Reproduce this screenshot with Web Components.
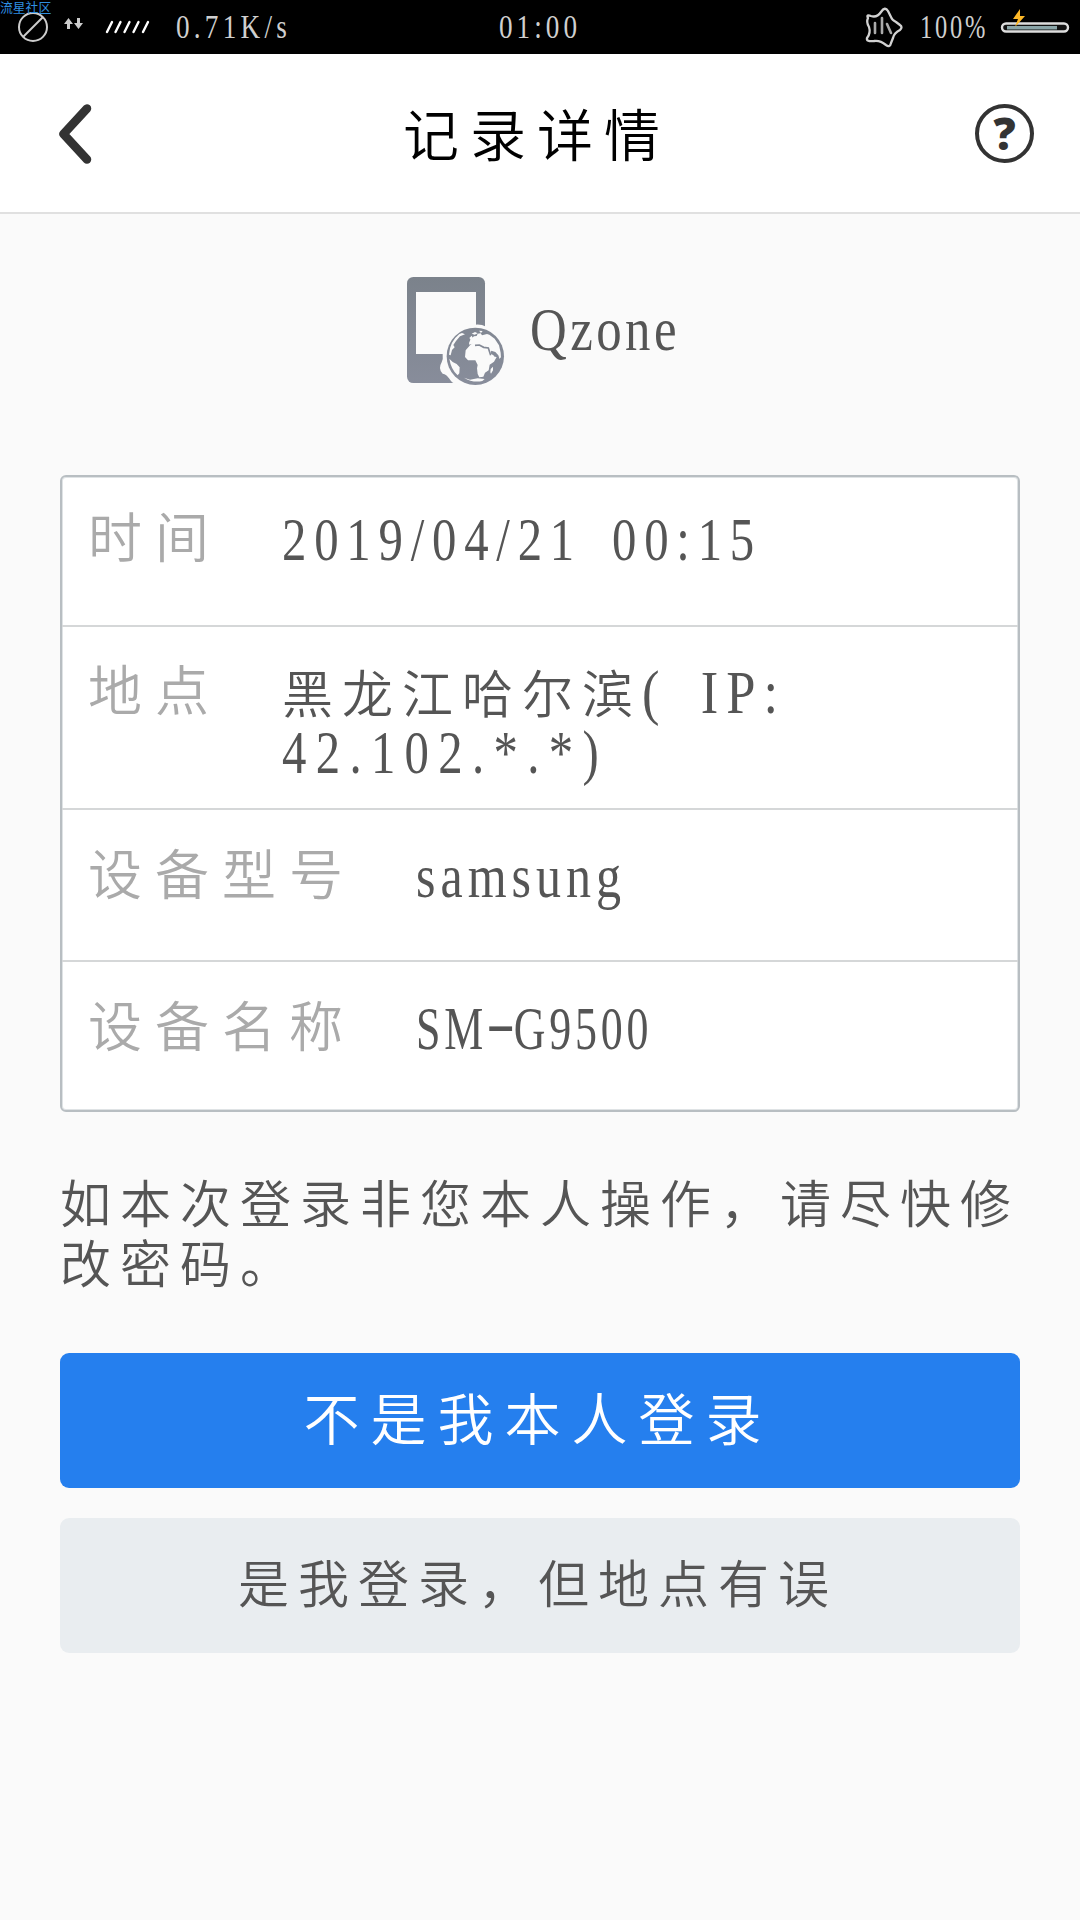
<!DOCTYPE html>
<html lang="zh-CN">
<head>
<meta charset="UTF-8">
<meta name="viewport" content="width=1080">
<title>记录详情</title>
<style>
    body {
        margin: 0;
        background: #fafafa;
        font-family: "Liberation Serif", "Noto Sans CJK SC", serif;
        font-weight: 350;
    }
</style>
</head>
<body>
<record-page></record-page>

<script>
// Latin text squeezed to a fixed total width
class FitText extends HTMLElement {
    connectedCallback() {
        this.attachShadow({ mode: 'open' });
        this.shadowRoot.innerHTML = `
            <style>
                :host {
                    display: inline-block;
                    white-space: nowrap;
                    font-weight: 400;
                }

                span {
                    display: inline-block;
                    white-space: pre;
                    transform-origin: 0 50%;
                }
            </style>
            <span><slot></slot></span>
        `;
        const span = this.shadowRoot.querySelector('span');
        const width = Number(this.getAttribute('width'));
        const scale = Number(this.getAttribute('scale') || 0.86);
        const count = this.textContent.length;
        span.style.letterSpacing = '0';
        const natural = span.getBoundingClientRect().width;
        span.style.letterSpacing = (width / scale - natural) / count + 'px';
        span.style.transform = `scaleX(${scale})`;
        this.style.width = width + 'px';
    }
}

class StatusBar extends HTMLElement {
    connectedCallback() {
        this.attachShadow({ mode: 'open' });
        this.shadowRoot.innerHTML = `
            <style>
                :host {
                    display: grid;
                    grid-template-columns: 1fr auto 1fr;
                    align-items: center;
                    position: relative;
                    height: 54px;
                    background: #000;
                    color: #cfcfcf;
                    font-size: 34px;
                    line-height: 52px;
                }

                .side {
                    display: flex;
                    align-items: center;
                    height: 54px;
                }

                .right {
                    justify-content: flex-end;
                }

                svg {
                    display: block;
                    flex: none;
                }

                .watermark {
                    position: absolute;
                    left: 0;
                    top: -1px;
                    font: 400 12.8px/15px "Noto Sans CJK SC", sans-serif;
                    color: #2f8fe0;
                }
            </style>
            <div class="side">
                <svg width="160" height="54" viewBox="0 0 160 54" fill="none">
                    <circle cx="33" cy="27" r="14" stroke="#ccc" stroke-width="2"/>
                    <path d="M23 37 43 17" stroke="#ccc" stroke-width="2"/>
                    <path d="M68.5 18l4.5 6h-3v5h-3v-5h-3zM78.500 29l-4.500-6h3v-5h3v5h3z" fill="#ccc"/>
                    <path d="M107 32l5-10M115.500 32l5-10M124.500 32l5-10M133.500 32l5-10M143 32l5-10" stroke="#fff" stroke-width="2.400" stroke-linecap="round"/>
                </svg>
                <fit-text width="115" scale="0.8" style="margin-left: 16px">0.71K/s</fit-text>
            </div>
            <fit-text width="82" scale="0.8">01:00</fit-text>
            <div class="side right">
                <svg width="44" height="54" viewBox="0 0 44 54" fill="none" stroke="#d2d2d2" stroke-width="2.300" stroke-linejoin="round" stroke-linecap="round">
                    <path d="M8 18Q6 14 11 16Q17 18 21 12Q25 6 28 11L31 17Q32 20 36 22L40 25Q43 27 40 30Q34 33 33 38L31 43Q30 48 26 45Q20 40 14 41Q6 42 7 38Q11 33 9 27Q6 22 8 18Z"/>
                    <path d="M15 23v10M22 18v15M27 24l4 9" stroke-width="2.600" stroke="#aaa"/>
                </svg>
                <fit-text width="68" scale="0.72" style="margin: 0 12px 0 16px">100%</fit-text>
                <svg width="80" height="54" viewBox="0 0 80 54">
                    <rect x="2" y="23.500" width="66" height="8" rx="4" fill="#111" stroke="#ddd" stroke-width="2.400"/>
                    <path d="M7 27.700h50" stroke="#8aa5a8" stroke-width="3.400"/>
                    <path d="M20 9 13 19h5l-3 8 10-11h-5z" fill="#fdb827"/>
                </svg>
            </div>
            <div class="watermark">流星社区</div>
        `;
    }
}

class TitleBar extends HTMLElement {
    connectedCallback() {
        this.attachShadow({ mode: 'open' });
        this.shadowRoot.innerHTML = `
            <style>
                :host {
                    display: grid;
                    grid-template-columns: 1fr auto 1fr;
                    align-items: center;
                    box-sizing: border-box;
                    height: 160px;
                    padding: 1px 58px 0;
                    background: #fff;
                    border-bottom: 2px solid #e0e0e0;
                }

                h1 {
                    margin: 6px 3px 0 -3px;
                    color: #000;
                    font-size: 56px;
                    font-weight: 350;
                    line-height: 80px;
                    letter-spacing: 11px;
                }

                svg {
                    display: block;
                }

                .help {
                    justify-self: end;
                    box-sizing: border-box;
                    width: 59px;
                    height: 59px;
                    margin-right: -12px;
                    border: 4.5px solid #333;
                    border-radius: 50%;
                    color: #333;
                    font: 800 44px/51px "Open Sans", sans-serif;
                    text-align: center;
                }
            </style>
            <svg width="36" height="62" viewBox="0 0 36 62" fill="none" stroke="#333" stroke-width="8.500" stroke-linecap="round" stroke-linejoin="round">
                <path d="M29 5.500 5.500 31 29 56.500"/>
            </svg>
            <h1><slot></slot></h1>
            <div class="help">?</div>
        `;
    }
}

class AppBadge extends HTMLElement {
    connectedCallback() {
        this.attachShadow({ mode: 'open' });
        this.shadowRoot.innerHTML = `
            <style>
                :host {
                    display: flex;
                    align-items: center;
                    height: 109px;
                    margin-top: 63px;
                    padding-left: 407px;
                    gap: 25px;
                    color: #555;
                    font-size: 62px;
                    line-height: 109px;
                }

                svg {
                    display: block;
                }

                fit-text {
                    margin-bottom: 5px;
                }
            </style>
            <svg width="98" height="109" viewBox="51 51 294 327">
                <defs>
                    <linearGradient id="g" gradientUnits="userSpaceOnUse" x1="0" y1="51" x2="0" y2="378">
                        <stop offset="0" stop-color="#7b828b"/>
                        <stop offset="1" stop-color="#888d9b"/>
                    </linearGradient>
                </defs>
                <rect x="51" y="51" width="234" height="318" rx="19" fill="url(#g)"/>
                <path d="M78 96h180v186H78z" fill="#fafafa"/>
                <path d="M158 282q2 15-3 25-12 20 3 34 12 2 19 14 10 16 22 18h90V200q-16-8-33-6-60 4-84 45-12 22-14 43z" fill="#fafafa"/>
                <circle cx="256" cy="289" r="86" fill="url(#g)"/>
                <g fill="#fafafa">
                    <path d="M240 256l9-8 24 2 6 7 17 4 9 28 15 2-8 14-13 9-3 17-11 7-5 12-12 2-5-10-2-17 2-10-7-14-22 0-9-10 2-20z"/>
                    <path d="M237 249l5-12 10-8 8-1 3-7 9-1 4 6 15-4 7 2 16 12 13 20 5 22 1 17-8-9-9-10-12-4-3 8 12 8-3 12-9-8-8-17-7-8-14-5-8-9-9 3-8-5-9 3z"/>
                    <path d="M238 234l7-7 3 6-5 7zM245 221l10-5 8 4-9 4zM267 212l11 1-5 6z"/>
                    <path d="M177 284q2-39 31-62l8-3 9 4-15 6-12 14-8 12 4 7-8 8-4 16z"/>
                    <path d="M178 296l10 10 12 6 9 10-1 18-5 6q-20-18-25-50z"/>
                    <path d="M302 327l7-7v11l-6 10-2-4zM325 286l6 4-2 8zM222 353l18 6 23-4 21 2-7 6q-29 6-55-10z"/>
                </g>
                <path d="M255 256l13-1 13 7 14 2 7 22" fill="none" stroke="url(#g)" stroke-width="5"/>
            </svg>
            <fit-text width="150" scale="0.82">${this.textContent}</fit-text>
        `;
    }
}

class DetailRow extends HTMLElement {
    connectedCallback() {
        this.attachShadow({ mode: 'open' });
        this.shadowRoot.innerHTML = `
            <style>
                :host {
                    display: flex;
                    box-sizing: border-box;
                    height: var(--row-height, 152px);
                    padding: var(--row-top, 36px) 20px 0 26px;
                    border-bottom: 2px solid #d5d7d8;
                }

                :host(:last-child) {
                    border-bottom: 0;
                }

                .label {
                    flex: none;
                    width: var(--label-width, 194px);
                    color: #aaa;
                    font-size: 54px;
                    line-height: 60px;
                    letter-spacing: 13px;
                }

                .value {
                    color: #555;
                    font-size: 61px;
                    line-height: 60px;
                }
            </style>
            <div class="label">${this.getAttribute('label')}</div>
            <div class="value"><slot></slot></div>
        `;
    }
}

class DetailCard extends HTMLElement {
    connectedCallback() {
        this.attachShadow({ mode: 'open' });
        this.shadowRoot.innerHTML = `
            <style>
                :host {
                    display: flex;
                    flex-direction: column;
                    box-sizing: border-box;
                    height: 637px;
                    margin-top: 89px;
                    background: #fff;
                    border: 2px solid #b8bec2;
                    border-radius: 6px;
                    box-shadow: inset 0 0 0 1px #dfe3e5;
                }
            </style>
            <slot></slot>
        `;
    }
}

class ActionButton extends HTMLElement {
    connectedCallback() {
        const primary = this.hasAttribute('primary');
        this.attachShadow({ mode: 'open' });
        this.shadowRoot.innerHTML = `
            <style>
                :host {
                    display: block;
                }

                button {
                    display: block;
                    width: 100%;
                    height: 135px;
                    margin: 0;
                    padding: 2px 4px 0 0;
                    border: 0;
                    border-radius: 9px;
                    background: ${primary ? '#257fee' : '#e9edf0'};
                    color: ${primary ? '#fff' : '#555'};
                    font: inherit;
                    font-size: ${primary ? 56 : 51}px;
                    letter-spacing: ${primary ? 11 : 9}px;
                    line-height: 133px;
                }
            </style>
            <button type="button"><slot></slot></button>
        `;
    }
}

class RecordPage extends HTMLElement {
    connectedCallback() {
        this.attachShadow({ mode: 'open' });
        this.shadowRoot.innerHTML = `
            <style>
                :host {
                    display: block;
                    min-height: 1920px;
                    background: #fafafa;
                }

                main {
                    padding: 0 60px;
                }

                detail-row > div {
                    height: 60px;
                    white-space: nowrap;
                }

                .place {
                    font-size: 51px;
                    letter-spacing: 9px;
                }

                .place fit-text {
                    font-size: 61px;
                }

                .clock {
                    margin-left: 30px;
                }

                .dash {
                    display: inline-block;
                    width: 37px;
                    letter-spacing: 0;
                    text-align: center;
                    transform: translateY(-6px) scaleX(2);
                }

                p {
                    margin: 59px 0 0;
                    color: #555;
                    font-family: "Noto Sans CJK SC", sans-serif;
                    font-size: 51px;
                    line-height: 60px;
                    letter-spacing: 9px;
                    word-break: break-all;
                    line-break: anywhere;
                }

                .actions {
                    display: flex;
                    flex-direction: column;
                    gap: 30px;
                    margin-top: 62px;
                }
            </style>
            <status-bar></status-bar>
            <title-bar>记录详情</title-bar>
            <app-badge>Qzone</app-badge>
            <main>
                <detail-card>
                    <detail-row label="时间" style="--row-height: 150px; --row-top: 33px">
                        <div><fit-text width="300" scale="0.8">2019/04/21</fit-text><fit-text class="clock" width="150" scale="0.8">00:15</fit-text></div>
                    </detail-row>
                    <detail-row label="地点" style="--row-height: 183px">
                        <div class="place">黑龙江哈尔滨<fit-text width="144" style="word-spacing: 14px">( IP:</fit-text></div>
                        <div><fit-text width="326" scale="0.8">42.102.*.*)</fit-text></div>
                    </detail-row>
                    <detail-row label="设备型号" style="--row-height: 152px; --row-top: 37px; --label-width: 328px">
                        <div><fit-text width="210" scale="0.82">samsung</fit-text></div>
                    </detail-row>
                    <detail-row label="设备名称" style="--row-height: 148px; --row-top: 37px; --label-width: 328px">
                        <div><fit-text width="240" scale="0.72">SM<span class="dash">-</span>G9500</fit-text></div>
                    </detail-row>
                </detail-card>
                <p>如本次登录非您本人操作，请尽快修改密码。</p>
                <div class="actions">
                    <action-button primary>不是我本人登录</action-button>
                    <action-button>是我登录，但地点有误</action-button>
                </div>
            </main>
        `;
    }
}

customElements.define('fit-text', FitText);
customElements.define('status-bar', StatusBar);
customElements.define('title-bar', TitleBar);
customElements.define('app-badge', AppBadge);
customElements.define('detail-row', DetailRow);
customElements.define('detail-card', DetailCard);
customElements.define('action-button', ActionButton);
customElements.define('record-page', RecordPage);
</script>
</body>
</html>
